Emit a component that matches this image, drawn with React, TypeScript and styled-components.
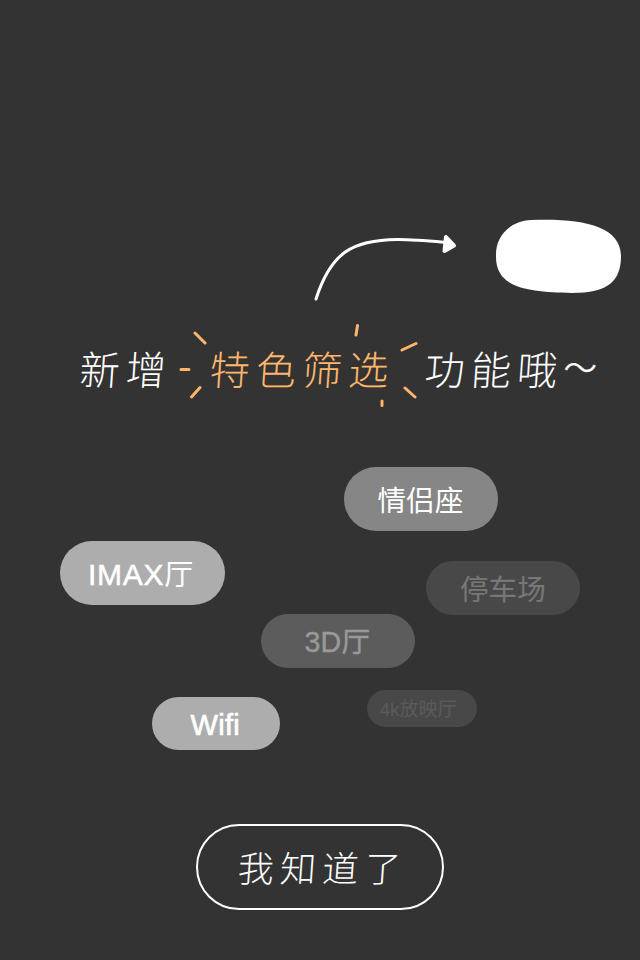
import React from "react";
import styled, { createGlobalStyle } from "styled-components";

const GlobalStyle = createGlobalStyle`
  * { box-sizing: border-box; }
  body { margin: 0; background: #333333; }
`;

const Screen = styled.main`
  width: 640px;
  height: 960px;
  display: flex;
  flex-direction: column;
  overflow: hidden;
  background: #333333;
  color: #ffffff;
  font-family: "Liberation Sans", "Noto Sans CJK SC", sans-serif;
`;

const Pointer = styled.header`
  height: 338px;
  padding: 210px 0 0 300px;
`;

const PointerArt = styled.svg`
  display: block;
  width: 340px;
  height: 100px;
`;

const Headline = styled.h1`
  height: 62px;
  margin: 0;
  padding-left: 80px;
  display: flex;
  align-items: flex-start;
  font-family: "Noto Sans CJK SC", sans-serif;
  font-size: 40px;
  line-height: 60px;
  font-weight: 300;
  letter-spacing: 6.2px;
  white-space: nowrap;
`;

const Slanted = styled.span`
  display: block;
  transform: skewX(-4deg);
`;

const Emphasis = styled.span`
  position: relative;
  margin: 0 30px 0 38px;
  color: #ffb66c;
`;

const Sparks = styled.svg`
  position: absolute;
  left: -35px;
  top: -18px;
  width: 250px;
  height: 90px;
`;

const Wave = styled.span`
  font-size: 33px;
  line-height: 56px;
  letter-spacing: 0;
  -webkit-text-stroke: 0.6px #ffffff;
`;

const TagCloud = styled.section`
  position: relative;
  height: 424px;
`;

const Tag = styled.span<{
  $x: number; $y: number; $w: number; $h: number;
  $bg: string; $fg: string; $size: number; $indent: number; $stroke: number; $drop: number; $track: number;
}>`
  position: absolute;
  left: ${(p) => p.$x}px;
  top: ${(p) => p.$y}px;
  width: ${(p) => p.$w}px;
  height: ${(p) => p.$h}px;
  padding: ${(p) => p.$drop}px 0 0 ${(p) => p.$indent}px;
  border-radius: 32px;
  background: ${(p) => p.$bg};
  color: ${(p) => p.$fg};
  font-size: ${(p) => p.$size}px;
  line-height: ${(p) => p.$h}px;
  letter-spacing: ${(p) => p.$track}px;
  font-variant-ligatures: none;
  white-space: nowrap;
  -webkit-text-stroke: ${(p) => p.$stroke}px ${(p) => p.$fg};
`;

const Hall = styled.span`
  font-size: 29px;
  -webkit-text-stroke: 0;
`;

const Confirm = styled.button`
  width: 248px;
  height: 86px;
  flex: none;
  align-self: center;
  display: flex;
  justify-content: center;
  align-items: center;
  padding: 0 0 2px 5px;
  border: 2px solid #ffffff;
  border-radius: 43px;
  background: transparent;
  color: #ffffff;
  font: 300 36px/80px "Noto Sans CJK SC", sans-serif;
  letter-spacing: 6.3px;
`;

const tags: {
  id: string; label: React.ReactNode; x: number; y: number; w: number; h: number;
  bg: string; fg: string; size: number; indent: number; stroke: number; drop: number; track: number;
}[] = [
  { id: "couple", label: "情侣座", x: 344, y: 67, w: 153.5, h: 64, bg: "#868686", fg: "#ffffff", size: 28.6, indent: 33.5, stroke: 0, drop: 2, track: 0 },
  { id: "imax", label: <>IMAX<Hall>厅</Hall></>, x: 60, y: 141, w: 165, h: 64, bg: "#adadad", fg: "#ffffff", size: 30, indent: 28, stroke: 0.5, drop: 2, track: 0.7 },
  { id: "parking", label: "停车场", x: 426, y: 161, w: 154, h: 53.5, bg: "#484848", fg: "#777777", size: 28.6, indent: 34, stroke: 0.1, drop: 3, track: 0 },
  { id: "3d", label: "3D厅", x: 261, y: 214, w: 154, h: 53.5, bg: "#5c5c5c", fg: "#999999", size: 28.6, indent: 43.5, stroke: 0.4, drop: 2, track: 0.2 },
  { id: "wifi", label: "Wifi", x: 151.5, y: 297, w: 128, h: 53, bg: "#adadad", fg: "#ffffff", size: 29, indent: 39, stroke: 0.7, drop: 2, track: 0.3 },
  { id: "4k", label: "4k放映厅", x: 366.5, y: 290, w: 110, h: 37, bg: "#484848", fg: "#5a5a5a", size: 19, indent: 13, stroke: 0.2, drop: 1, track: 0 },
];

export default function App() {
  return (
    <>
      <GlobalStyle />
      <Screen>
        <Pointer>
          <PointerArt viewBox="300 210 340 100" aria-hidden="true">
            <path d="M316 299C331 252 353 240 397 239.5C412 239.3 430 241 447 242.5" fill="none" stroke="#fff" strokeWidth="3" strokeLinecap="round" />
            <path d="M446 237L454 245.5L444.5 251Z" fill="#fff" stroke="#fff" strokeWidth="4" strokeLinejoin="round" />
            <path d="M531 220C580 218 621 225 621 256C621 281 608 293 572 293C530 292 496 289 496 257C495 235 511 221 531 220Z" fill="#fff" />
          </PointerArt>
        </Pointer>
        <Headline>
          <Slanted>新增</Slanted>
          <Emphasis>
            <Slanted>特色筛选</Slanted>
            <Sparks viewBox="175 320 250 90" fill="none" stroke="#ffb66c" strokeWidth="3" strokeLinecap="round" aria-hidden="true">
              <path d="M195 333L205 343M181 369.500H189M191.500 397L200 387.500M357.500 325.500L356 335M402 350L416 343.500M405 388L415 397M382 401V405.500" />
            </Sparks>
          </Emphasis>
          <Slanted>功能哦</Slanted>
          <Wave>～</Wave>
        </Headline>
        <TagCloud>
          {tags.map((t) => (
            <Tag key={t.id} $x={t.x} $y={t.y} $w={t.w} $h={t.h} $bg={t.bg} $fg={t.fg}
              $size={t.size} $indent={t.indent} $stroke={t.stroke} $drop={t.drop} $track={t.track}>
              {t.label}
            </Tag>
          ))}
        </TagCloud>
        <Confirm type="button">
          <Slanted>我知道了</Slanted>
        </Confirm>
      </Screen>
    </>
  );
}
